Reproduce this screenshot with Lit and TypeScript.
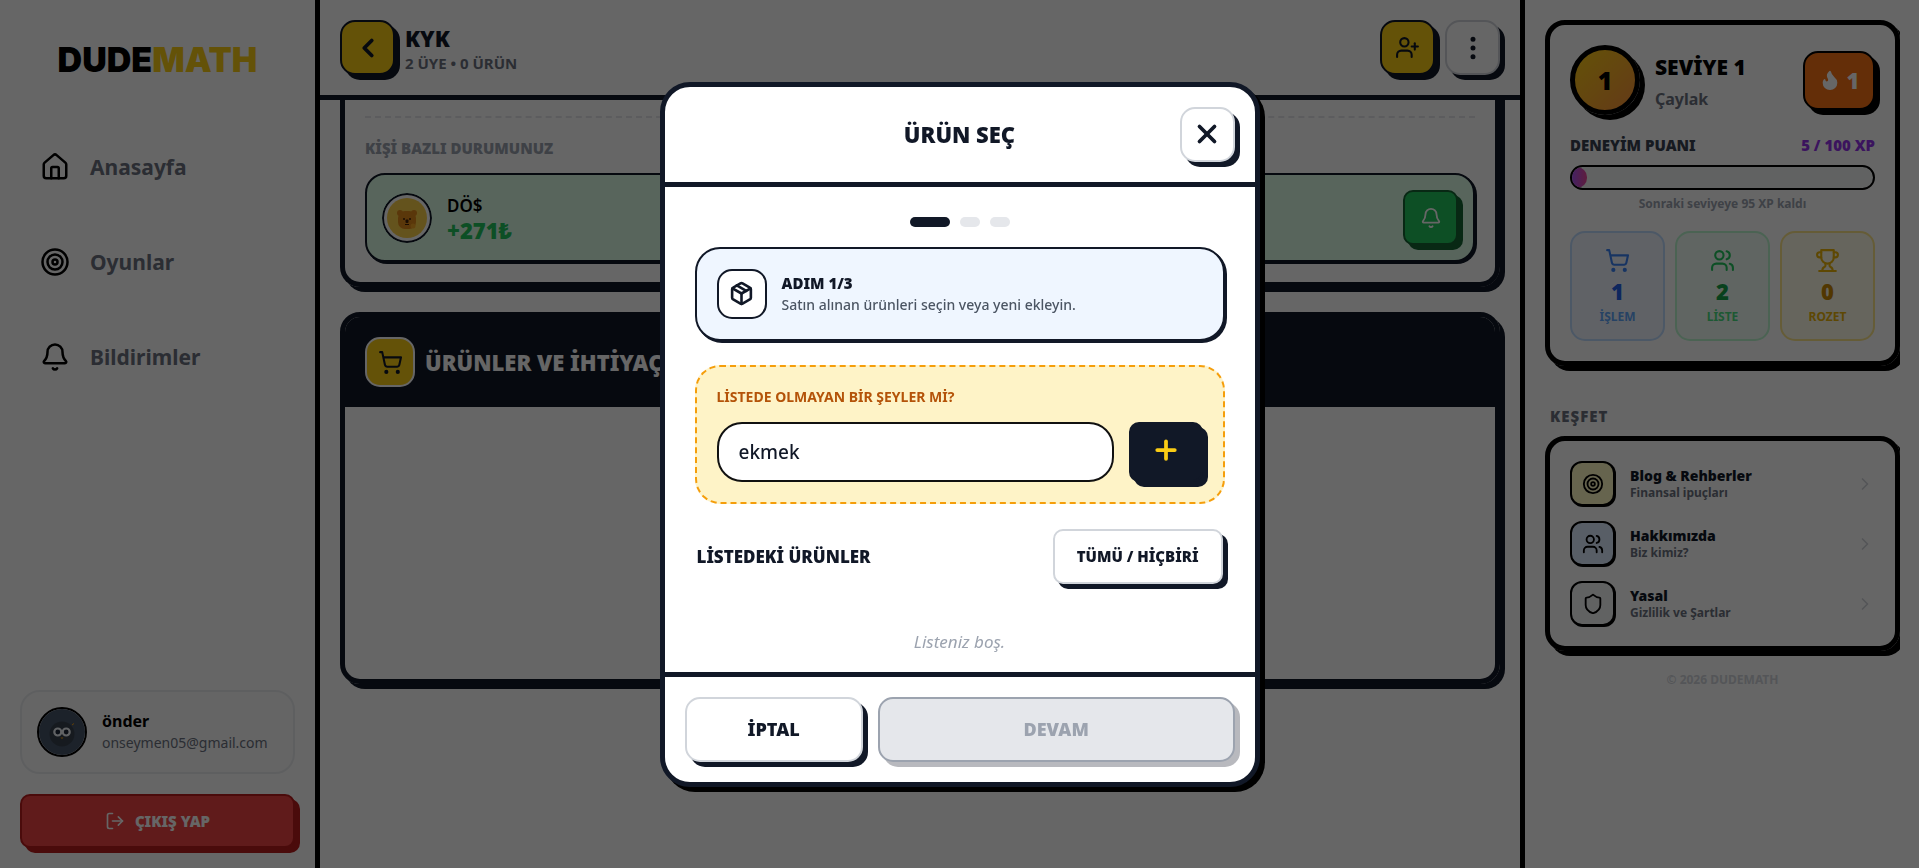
import { LitElement, html, css, svg, nothing, type TemplateResult } from "lit";
import { customElement, property, state } from "lit/decorators.js";

const ICONS: Record<string, TemplateResult> = {
  home: svg`<path d="M15 21v-8a1 1 0 0 0-1-1h-4a1 1 0 0 0-1 1v8"/><path d="M3 10a2 2 0 0 1 .709-1.528l7-5.999a2 2 0 0 1 2.582 0l7 5.999A2 2 0 0 1 21 10v9a2 2 0 0 1-2 2H5a2 2 0 0 1-2-2z"/>`,
  target: svg`<circle cx="12" cy="12" r="10"/><circle cx="12" cy="12" r="6"/><circle cx="12" cy="12" r="2"/>`,
  bell: svg`<path d="M10.268 21a2 2 0 0 0 3.464 0"/><path d="M3.262 15.326A1 1 0 0 0 4 17h16a1 1 0 0 0 .74-1.673C19.41 13.956 18 12.499 18 8A6 6 0 0 0 6 8c0 4.499-1.411 5.956-2.738 7.326"/>`,
  logout: svg`<path d="m16 17 5-5-5-5"/><path d="M21 12H9"/><path d="M9 21H5a2 2 0 0 1-2-2V5a2 2 0 0 1 2-2h4"/>`,
  back: svg`<path d="m15 18-6-6 6-6"/>`,
  next: svg`<path d="m9 18 6-6-6-6"/>`,
  userPlus: svg`<path d="M16 21v-2a4 4 0 0 0-4-4H6a4 4 0 0 0-4 4v2"/><circle cx="9" cy="7" r="4"/><path d="M19 8v6"/><path d="M22 11h-6"/>`,
  users: svg`<path d="M16 21v-2a4 4 0 0 0-4-4H6a4 4 0 0 0-4 4v2"/><circle cx="9" cy="7" r="4"/><path d="M22 21v-2a4 4 0 0 0-3-3.87"/><path d="M16 3.13a4 4 0 0 1 0 7.75"/>`,
  more: svg`<circle cx="12" cy="5" r="1"/><circle cx="12" cy="12" r="1"/><circle cx="12" cy="19" r="1"/>`,
  cart: svg`<circle cx="8" cy="21" r="1"/><circle cx="19" cy="21" r="1"/><path d="M2.05 2.05h2l2.66 12.42a2 2 0 0 0 2 1.58h9.78a2 2 0 0 0 1.95-1.57l1.65-7.43H5.12"/>`,
  trophy: svg`<path d="M6 9H4.5a2.5 2.5 0 0 1 0-5H6"/><path d="M18 9h1.5a2.5 2.5 0 0 0 0-5H18"/><path d="M4 22h16"/><path d="M10 14.66V17c0 .55-.47.98-.97 1.21C7.85 18.75 7 20.24 7 22"/><path d="M14 14.66V17c0 .55.47.98.97 1.21C16.15 18.75 17 20.24 17 22"/><path d="M18 2H6v7a6 6 0 0 0 12 0V2Z"/>`,
  shield: svg`<path d="M20 13c0 5-3.5 7.5-7.66 8.95a1 1 0 0 1-.67-.01C7.5 20.5 4 18 4 13V6a1 1 0 0 1 1-1c2 0 4.5-1.2 6.24-2.72a1.17 1.17 0 0 1 1.52 0C14.51 3.81 17 5 19 5a1 1 0 0 1 1 1z"/>`,
  box: svg`<path d="M11 21.73a2 2 0 0 0 2 0l7-4A2 2 0 0 0 21 16V8a2 2 0 0 0-1-1.73l-7-4a2 2 0 0 0-2 0l-7 4A2 2 0 0 0 3 8v8a2 2 0 0 0 1 1.73z"/><path d="M12 22V12"/><path d="m3.3 7 8.7 5 8.7-5"/><path d="m7.5 4.27 9 5.15"/>`,
  flame: svg`<path fill="currentColor" d="M8.5 14.5A2.5 2.5 0 0 0 11 12c0-1.38-.5-2-1-3-1.072-2.143-.224-4.054 2-6 .5 2.5 2 4.9 4 6.5 2 1.6 3 3.5 3 5.5a7 7 0 1 1-14 0c0-1.153.433-2.294 1-3a2.5 2.5 0 0 0 2.5 2.5z"/>`,
  close: svg`<path d="M18 6 6 18"/><path d="m6 6 12 12"/>`,
  plus: svg`<path d="M5 12h14"/><path d="M12 5v14"/>`,
};

const icon = (name: string, size: number, stroke = 2) => html`<svg
  width=${size} height=${size} viewBox="0 0 24 24" fill="none" stroke="currentColor"
  stroke-width=${stroke} stroke-linecap="round" stroke-linejoin="round" aria-hidden="true">${ICONS[name]}</svg>`;

const base = css`
  :host, *, *::before, *::after { box-sizing: border-box; }
  p, h1, h2, h3 { margin: 0; }
  a { color: inherit; text-decoration: none; }
  button, input { font: inherit; color: inherit; margin: 0; }
  svg { display: block; flex: none; }
  .btn {
    display: flex; align-items: center; justify-content: center; gap: 10px;
    flex: none; padding: 0; cursor: pointer;
    border: 2px solid #111827; border-radius: 10px;
    box-shadow: 5px 5px 0 #111827; background: #fff; color: #111827;
    font-weight: 900;
  }
  .btn.square { width: 55px; height: 55px; border-radius: 15px; }
  .btn.yellow { background: #facc15; }
  .btn.light { border-color: #d1d5db; }
`;

@customElement("side-nav")
export class SideNav extends LitElement {
  static styles = [base, css`
    :host { display: flex; flex-direction: column; padding: 20px; border-right: 5px solid #000; background: #fff; }
    .logo { text-align: center; font: 900 34px/40px Inter, "Noto Sans", sans-serif; color: #000; padding: 20px 0; }
    .logo span { color: #facc15; }
    .links { display: flex; flex-direction: column; gap: 20px; padding-top: 29px; }
    .links a { display: flex; align-items: center; gap: 20px; height: 75px; padding: 0 20px; color: #000; }
    .links span { font-size: 21px; font-weight: 700; color: #6b7280; }
    .bottom { margin-top: auto; display: flex; flex-direction: column; gap: 20px; }
    .user { display: flex; align-items: center; gap: 15px; padding: 15px; border: 2px solid #eceef1; border-radius: 20px; background: #fcfcfd; }
    .user svg { border: 2px solid #000; border-radius: 50%; }
    .name { font-weight: 700; font-size: 16px; line-height: 22px; color: #000; }
    .mail { font-size: 14px; line-height: 22px; color: #6b7280; }
    .exit { height: 54px; font-size: 15px; color: #fff; background: #ef4444; border-color: #b91c1c; box-shadow: 5px 5px 0 #b91c1c; }
  `];
  render() {
    const links = [["home", "Anasayfa"], ["target", "Oyunlar"], ["bell", "Bildirimler"]];
    return html`
      <div class="logo">DUDE<span>MATH</span></div>
      <nav class="links">${links.map(([i, t]) => html`<a href="#">${icon(i, 30)}<span>${t}</span></a>`)}</nav>
      <div class="bottom">
        <div class="user">
          <svg width="50" height="50" viewBox="0 0 46 46" aria-hidden="true">
            <rect width="46" height="46" fill="#475569"/>
            <circle cx="23" cy="25" r="12.500" fill="#38434f"/>
            <g fill="#1e293b" stroke="#f1f5f9" stroke-width="2.200"><circle cx="18.800" cy="23" r="3.500"/><circle cx="27.200" cy="23" r="3.500"/></g>
            <path d="M21.500 28.500h3l-1.500 1.500z" fill="#f59e0b"/>
            <path d="M33 16l2-1.500" stroke="#f59e0b"/>
          </svg>
          <div><p class="name">önder</p><p class="mail">onseymen05@gmail.com</p></div>
        </div>
        <button class="btn exit">${icon("logout", 20)}ÇIKIŞ YAP</button>
      </div>`;
  }
}

@customElement("group-page")
export class GroupPage extends LitElement {
  static styles = [base, css`
    :host { display: flex; flex-direction: column; min-width: 0; background: #fff; }
    header { display: flex; gap: 10px; padding: 20px; border-bottom: 5px solid #111827; }
    .heading { align-self: flex-end; flex: 1; }
    h1 { font-size: 22px; font-weight: 900; line-height: 28px; color: #111827; }
    .meta { font-size: 15px; font-weight: 700; line-height: 23px; color: #6b7280; }
    .content { flex: 1; min-height: 0; overflow: hidden; padding: 0 20px; display: flex; flex-direction: column; gap: 25px; }
    .card { border: 5px solid #111827; border-radius: 20px; box-shadow: 5px 5px 0 #111827; overflow: hidden; flex: none; }
    .card.status { border-top: 0; border-radius: 0 0 20px 20px; box-shadow: 5px 5px 0 #111827, 5px 0 0 #111827; padding: 16px 20px 20px; }
    .status h2 { border-top: 2px dashed #e5e7eb; padding-top: 20px; margin-bottom: 15px; font-size: 15px; font-weight: 900; line-height: 20px; color: #9ca3af; }
    .person { display: flex; align-items: center; gap: 15px; padding: 15px; border: 2px solid #111827; border-radius: 20px; background: #dcfce7; box-shadow: 2px 2px 0 #111827; }
    .person > svg { border-radius: 50%; }
    .person div { flex: 1; line-height: 24px; }
    .who { font-size: 17px; font-weight: 600; color: #000; }
    .sum { font-size: 22px; font-weight: 900; color: #22c55e; }
    .btn.remind { border-radius: 10px; color: #fff; background: #22c55e; border-color: #166534; box-shadow: 5px 5px 0 #166534; }
    .items { min-height: 372px; }
    .items .bar { display: flex; align-items: center; gap: 10px; padding: 20px; background: #111827; color: #fff; }
    .items h2 { font-size: 22px; font-weight: 900; line-height: 30px; }
    .tile { width: 50px; height: 50px; display: grid; place-items: center; border: 2px solid #fff; border-radius: 15px; background: #facc15; color: #111827; }
  `];
  render() {
    return html`
      <header>
        <button class="btn square yellow" aria-label="Geri">${icon("back", 30, 3)}</button>
        <div class="heading"><h1>KYK</h1><p class="meta">2 ÜYE • 0 ÜRÜN</p></div>
        <button class="btn square yellow" aria-label="Üye ekle">${icon("userPlus", 25)}</button>
        <button class="btn square light" aria-label="Menü">${icon("more", 30, 2)}</button>
      </header>
      <div class="content">
        <section class="card status">
          <h2>KİŞİ BAZLI DURUMUNUZ</h2>
          <div class="person">
            <svg width="50" height="50" viewBox="0 0 50 50" aria-hidden="true">
              <circle cx="25" cy="25" r="24" fill="#fff" stroke="#111827" stroke-width="2"/>
              <circle cx="25" cy="25" r="20" fill="#fbcf4a"/>
              <g fill="#e0891a"><circle cx="18" cy="20" r="3"/><circle cx="32" cy="20" r="3"/><rect x="16" y="18" width="18" height="18" rx="7"/></g>
              <circle cx="31" cy="33" r="2.500" fill="#f5a623"/>
              <g fill="#422006"><circle cx="22" cy="26" r="1"/><circle cx="28" cy="26" r="1"/><rect x="23.500" y="26.500" width="3" height="3.500" rx="1"/></g>
              <path d="M23 31.500h4" stroke="#422006"/>
            </svg>
            <div><p class="who">DÖ$</p><p class="sum">+271₺</p></div>
            <button class="btn square remind" aria-label="Hatırlat">${icon("bell", 22)}</button>
          </div>
        </section>
        <section class="card items">
          <div class="bar"><span class="tile">${icon("cart", 25)}</span><h2>ÜRÜNLER VE İHTİYAÇLAR</h2></div>
        </section>
      </div>`;
  }
}

@customElement("level-panel")
export class LevelPanel extends LitElement {
  static styles = [base, css`
    :host { display: block; padding: 20px 19px 20px 20px; border-left: 5px solid #000; background: #fff; }
    .clip { overflow: hidden; height: 100%; }
    .card { border: 5px solid #000; border-radius: 20px; padding: 20px; box-shadow: 5px 5px 0 #000; }
    .top { display: flex; align-items: center; gap: 15px; }
    .level { width: 70px; height: 70px; border: 5px solid #000; border-radius: 50%; box-shadow: 5px 5px 0 #000; display: grid; place-items: center; font-size: 25px; font-weight: 900; color: #000; background: linear-gradient(135deg, #facc15, #fb923c); }
    .rank { flex: 1; align-self: flex-end; }
    .rank h2 { font-size: 21px; font-weight: 900; line-height: 31px; color: #000; }
    .rank p { font-size: 16px; font-weight: 700; line-height: 32px; color: #6b7280; }
    .streak { width: 72px; height: 59px; display: flex; align-items: center; justify-content: center; gap: 6px; border: 2px solid #000; border-radius: 15px; box-shadow: 5px 5px 0 #000; background: #f97316; color: #fff; font-size: 22px; font-weight: 900; }
    .xp { display: flex; justify-content: space-between; margin: 20px 0 9px; font-size: 15px; font-weight: 900; line-height: 21px; color: #374151; }
    .xp b { font-weight: 900; color: #9333ea; }
    .track { height: 25px; border: 2px solid #000; border-radius: 13px; background: #f3f4f6; overflow: hidden; }
    .fill { height: 100%; border-radius: 0 10px 10px 0; background: linear-gradient(90deg, #a855f7, #ec4899); }
    .left { margin: 5px 0 18px; text-align: center; font-size: 12px; font-weight: 700; line-height: 18px; color: #9ca3af; }
    .stats { display: grid; grid-template-columns: repeat(3, 1fr); gap: 10px; }
    .stat { display: flex; flex-direction: column; align-items: center; padding: 15px 0 12px; border: 2px solid; border-radius: 15px; }
    .stat b { font-size: 22px; font-weight: 900; line-height: 34px; margin-top: 1px; }
    .stat small { font-size: 12px; font-weight: 700; line-height: 18px; padding-bottom: 1px; }
    .blue { background: #eff6ff; border-color: #bfdbfe; color: #3b82f6; } .blue b { color: #2563eb; } .blue small { color: #60a5fa; }
    .green { background: #f0fdf4; border-color: #bbf7d0; color: #22c55e; } .green b { color: #16a34a; } .green small { color: #4ade80; }
    .gold { background: #fefce8; border-color: #fde68a; color: #eab308; } .gold b { color: #ca8a04; } .gold small { color: #eab308; }
    .label { margin: 39px 0 8px; padding-left: 5px; font-size: 15px; font-weight: 900; letter-spacing: 1px; line-height: 23px; color: #6b7280; }
    .more { display: flex; flex-direction: column; gap: 15px; }
    .more a { display: flex; align-items: center; gap: 15px; color: #d1d5db; }
    .tile { width: 45px; height: 45px; display: grid; place-items: center; border: 2px solid #000; border-radius: 12px; box-shadow: 1px 1px 0 #000; color: #000; }
    .text { flex: 1; line-height: 17px; font-size: 12px; font-weight: 700; color: #6b7280; }
    .text b { display: block; font-size: 14px; font-weight: 900; color: #111827; }
    .t0 { background: #fef9c3; } .t1 { background: #dbeafe; } .t2 { background: #f3f4f6; }
    .copy { margin-top: 20px; text-align: center; font-size: 12px; font-weight: 700; line-height: 17px; color: #d1d5db; }
  `];
  @property({ type: Number }) xp = 5;
  render() {
    const stats = [["blue", "cart", "1", "İŞLEM"], ["green", "users", "2", "LİSTE"], ["gold", "trophy", "0", "ROZET"]];
    const more = [["target", "Blog & Rehberler", "Finansal ipuçları"], ["users", "Hakkımızda", "Biz kimiz?"], ["shield", "Yasal", "Gizlilik ve Şartlar"]];
    return html`<div class="clip">
      <section class="card">
        <div class="top">
          <span class="level">1</span>
          <div class="rank"><h2>SEVİYE 1</h2><p>Çaylak</p></div>
          <span class="streak">${icon("flame", 22)}1</span>
        </div>
        <div class="xp"><span>DENEYİM PUANI</span><b>${this.xp} / 100 XP</b></div>
        <div class="track"><div class="fill" style="width:${this.xp}%"></div></div>
        <p class="left">Sonraki seviyeye ${100 - this.xp} XP kaldı</p>
        <div class="stats">${stats.map(([c, i, n, t]) => html`<div class="stat ${c}">${icon(i, 25)}<b>${n}</b><small>${t}</small></div>`)}</div>
      </section>
      <h3 class="label">KEŞFET</h3>
      <nav class="card more">${more.map(([i, t, s], n) => html`
        <a href="#"><span class="tile t${n}">${icon(i, 22)}</span><span class="text"><b>${t}</b>${s}</span>${icon("next", 20)}</a>`)}</nav>
      <p class="copy">© 2026 DUDEMATH</p>
    </div>`;
  }
}

@customElement("product-dialog")
export class ProductDialog extends LitElement {
  static styles = [base, css`
    :host { display: block; width: 600px; max-width: 100%; border: 5px solid #111827; border-radius: 30px; background: #fff; box-shadow: 5px 5px 0 #000; color: #111827; overflow: hidden; }
    header { display: grid; grid-template-columns: 55px 1fr 55px; align-items: center; padding: 20px; border-bottom: 5px solid #111827; }
    h2 { grid-column: 2; text-align: center; font-size: 22px; font-weight: 900; line-height: 30px; }
    .body { padding: 30px 30px 18px; }
    .steps { display: flex; justify-content: center; gap: 10px; margin-bottom: 20px; }
    .steps i { width: 20px; height: 10px; border-radius: 5px; background: #e5e7eb; }
    .steps i.on { width: 40px; background: #111827; }
    .step { display: flex; align-items: center; gap: 15px; padding: 20px; border: 2px solid #111827; border-radius: 25px; background: #eff6ff; box-shadow: 2px 2px 0 #111827; }
    .tile { width: 50px; height: 50px; display: grid; place-items: center; border: 2px solid #111827; border-radius: 15px; background: #fff; }
    .step h3 { font-size: 15px; font-weight: 900; line-height: 22px; }
    .step p { font-size: 14px; font-weight: 500; line-height: 22px; color: #4b5563; }
    .add { margin: 24px 0 25px; padding: 20px; border: 2px dashed #f59e0b; border-radius: 25px; background: #fef3c7; }
    .add label { display: block; margin-bottom: 15px; font-size: 14px; font-weight: 700; line-height: 20px; color: #b45309; }
    .row { display: flex; gap: 15px; }
    .row input { flex: 1; min-width: 0; height: 60px; padding: 0 20px; border: 2px solid #111; border-radius: 25px; background: #fff; font-size: 19px; font-weight: 500; outline: none; }
    .btn.plus { width: 74px; padding-bottom: 4px; background: #111827; color: #facc15; }
    .list { display: flex; align-items: center; justify-content: space-between; padding: 0 2px; }
    .list h3 { font-size: 17px; font-weight: 900; }
    .btn.all { height: 55px; padding: 0 22px; font-size: 15px; font-weight: 900; }
    .empty { margin-top: 45px; text-align: center; font-size: 17px; font-style: italic; line-height: 25px; color: #9ca3af; }
    footer { display: grid; grid-template-columns: 1fr 2fr; gap: 15px; padding: 20px; border-top: 5px solid #111827; }
    footer .btn { height: 65px; border-radius: 15px; font-size: 18px; }
    footer .btn:disabled { background: #e5e7eb; border-color: #9ca3af; color: #9ca3af; box-shadow: 5px 5px 0 #b8b9be; cursor: default; }
  `];
  @state() private product = "ekmek";
  render() {
    return html`
      <header><h2>ÜRÜN SEÇ</h2><button class="btn square light" aria-label="Kapat">${icon("close", 30, 3)}</button></header>
      <div class="body">
        <div class="steps">${[0, 1, 2].map((n) => html`<i class=${n ? nothing : "on"}></i>`)}</div>
        <div class="step">
          <span class="tile">${icon("box", 25, 2.5)}</span>
          <div><h3>ADIM 1/3</h3><p>Satın alınan ürünleri seçin veya yeni ekleyin.</p></div>
        </div>
        <div class="add">
          <label for="product">LİSTEDE OLMAYAN BİR ŞEYLER Mİ?</label>
          <div class="row">
            <input id="product" type="text" .value=${this.product}
              @input=${(e: Event) => (this.product = (e.target as HTMLInputElement).value)}>
            <button class="btn plus" aria-label="Ekle">${icon("plus", 30, 3)}</button>
          </div>
        </div>
        <div class="list"><h3>LİSTEDEKİ ÜRÜNLER</h3><button class="btn light all">TÜMÜ / HİÇBİRİ</button></div>
        <p class="empty">Listeniz boş.</p>
      </div>
      <footer><button class="btn light">İPTAL</button><button class="btn" disabled>DEVAM</button></footer>`;
  }
}

@customElement("app-root")
export class AppRoot extends LitElement {
  static styles = css`
    :host { display: grid; grid-template-columns: 320px 1fr 399px; height: 100vh; overflow: hidden; font-family: "Noto Sans", "Open Sans", sans-serif; }
    .overlay { position: fixed; inset: 0; display: grid; place-items: center; background: rgba(0, 0, 0, 0.6); }
  `;
  render() {
    return html`
      <side-nav></side-nav>
      <group-page></group-page>
      <level-panel></level-panel>
      <div class="overlay"><product-dialog role="dialog" aria-label="Ürün seç"></product-dialog></div>`;
  }
}
